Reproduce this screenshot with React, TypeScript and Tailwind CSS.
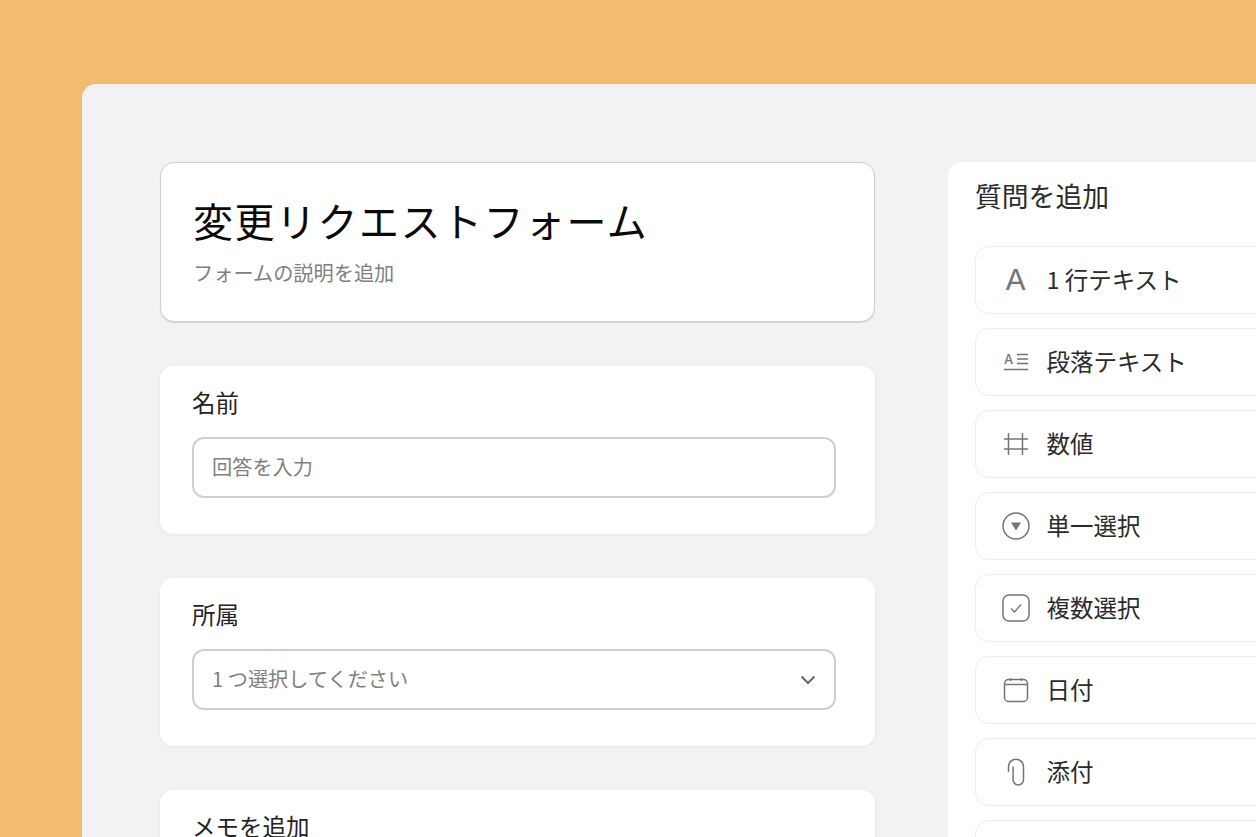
import { ReactNode } from "react";

const jp = "font-['Noto_Sans_CJK_JP','Noto_Sans',sans-serif]";

function TextAIcon() {
    return (
        <span className="block scale-x-110 font-['Inter',sans-serif] text-[28px] leading-none font-normal text-[#757575]">
            A
        </span>
    );
}

function ParagraphIcon() {
    return (
        <span className="relative block h-[22px] w-[26px]">
            <span className="absolute top-[1px] left-[1px] font-['Inter',sans-serif] text-[13px] leading-[14px] font-medium text-[#757575]">
                A
            </span>
            <svg viewBox="0 0 26 22" className="h-[22px] w-[26px]" fill="none" stroke="#757575" strokeWidth="1.3">
                <path d="M14 3.5h11M14 8h11M14 12.5h11" />
                <path d="M1 18.5h24" strokeWidth="1.5" />
            </svg>
        </span>
    );
}

function HashIcon() {
    return (
        <svg viewBox="0 0 26 26" className="h-[26px] w-[26px]" fill="none" stroke="#757575" strokeWidth="1.5">
            <path d="M5.5 2v22M19.5 2v22M1 8h24M1 18h24" />
        </svg>
    );
}

function DropdownIcon() {
    return (
        <svg viewBox="0 0 28 28" className="h-[28px] w-[28px]" fill="none">
            <circle cx="14" cy="14" r="13" stroke="#757575" strokeWidth="1.5" />
            <path d="M9 10.5h10l-5 8z" fill="#757575" />
        </svg>
    );
}

function CheckIcon() {
    return (
        <svg viewBox="0 0 28 28" className="h-[28px] w-[28px]" fill="none" stroke="#757575">
            <rect x="1" y="1" width="26" height="26" rx="6" strokeWidth="1.5" />
            <path d="M9 14.5l3.5 3.5 6.5-7.5" strokeWidth="1.4" />
        </svg>
    );
}

function CalendarIcon() {
    return (
        <svg viewBox="0 0 26 26" className="h-[26px] w-[26px]" fill="none" stroke="#757575" strokeWidth="1.5">
            <rect x="1.5" y="2.5" width="23" height="22" rx="4" />
            <path d="M1.5 7.5h23M7.5 1v3M18.5 1v3" />
        </svg>
    );
}

function ClipIcon() {
    return (
        <svg viewBox="0 0 18 28" className="h-[28px] w-[18px]" fill="none" stroke="#757575" strokeWidth="1.5" strokeLinecap="round">
            <path d="M1.5 13.5V8.7a7.5 7.5 0 0 1 15 0v13a5.2 5.2 0 0 1-10.4 0V9" />
        </svg>
    );
}

function ChevronIcon() {
    return (
        <svg viewBox="0 0 16 10" className="h-[10px] w-[16px]" fill="none" stroke="#666666" strokeWidth="2">
            <path d="M1.5 1.5L8 8l6.5-6.5" />
        </svg>
    );
}

function QuestionRow({ icon, label }: { icon?: ReactNode; label?: string }) {
    return (
        <div className="flex h-[68px] shrink-0 items-center gap-[16.5px] rounded-[14px] border border-[#ededee] bg-white pl-[26px]">
            <div className="flex w-[28px] items-center justify-center">{icon}</div>
            <span className="text-[23.5px] leading-none text-[#2b2b2b]">{label}</span>
        </div>
    );
}

function FieldCard({ label, children }: { label: string; children?: ReactNode }) {
    return (
        <section className="h-[168px] shrink-0 rounded-[14px] bg-white px-[32px] pt-[19px] shadow-[0_1px_4px_rgba(0,0,0,0.05)]">
            <h2 className="text-[23.5px] leading-[34px] text-[#222222]">{label}</h2>
            {children}
        </section>
    );
}

export default function App() {
    return (
        <div className={`h-[837px] w-[1256px] overflow-hidden bg-[#f2bc6f] pt-[84px] pl-[82px] ${jp}`}>
            <div className="flex h-[900px] w-[1300px] gap-[73px] rounded-tl-[14px] bg-[#f2f2f4] pt-[78px] pl-[78px]">
                <div className="flex w-[715px] shrink-0 flex-col gap-[44px]">
                    <section className="h-[160px] shrink-0 rounded-[14px] border border-[#cfcfd1] bg-white px-[32px] pt-[28px] shadow-[0_1px_1px_#d8d8da]">
                        <h1 className="text-[40px] leading-[58px] tracking-[1.5px] text-[#0a0a0a]">
                            変更リクエストフォーム
                        </h1>
                        <p className="mt-[10px] text-[20.2px] leading-[28px] text-[#808080]">
                            フォームの説明を追加
                        </p>
                    </section>

                    <FieldCard label="名前">
                        <div className="mt-[18px] flex h-[61px] w-[644px] items-center rounded-[12px] border-2 border-[#cfcfd1] bg-white pl-[18px]">
                            <span className="text-[20.2px] leading-none text-[#808080]">回答を入力</span>
                        </div>
                    </FieldCard>

                    <FieldCard label="所属">
                        <div className="mt-[18px] flex h-[61px] w-[644px] items-center justify-between rounded-[12px] border-2 border-[#cfcfd1] bg-white pr-[18px] pl-[18px]">
                            <span className="text-[20.2px] leading-none text-[#808080]">1 つ選択してください</span>
                            <ChevronIcon />
                        </div>
                    </FieldCard>

                    <FieldCard label="メモを追加" />
                </div>

                <aside className="flex h-[760px] w-[420px] shrink-0 flex-col gap-[14px] rounded-tl-[14px] bg-white pl-[27px]">
                    <h2 className="mb-[18px] h-[52px] pt-[10px] text-[26.8px] leading-[48px] text-[#2b2b2b]">
                        質問を追加
                    </h2>
                    <QuestionRow icon={<TextAIcon />} label="1 行テキスト" />
                    <QuestionRow icon={<ParagraphIcon />} label="段落テキスト" />
                    <QuestionRow icon={<HashIcon />} label="数値" />
                    <QuestionRow icon={<DropdownIcon />} label="単一選択" />
                    <QuestionRow icon={<CheckIcon />} label="複数選択" />
                    <QuestionRow icon={<CalendarIcon />} label="日付" />
                    <QuestionRow icon={<ClipIcon />} label="添付" />
                    <QuestionRow />
                </aside>
            </div>
        </div>
    );
}
